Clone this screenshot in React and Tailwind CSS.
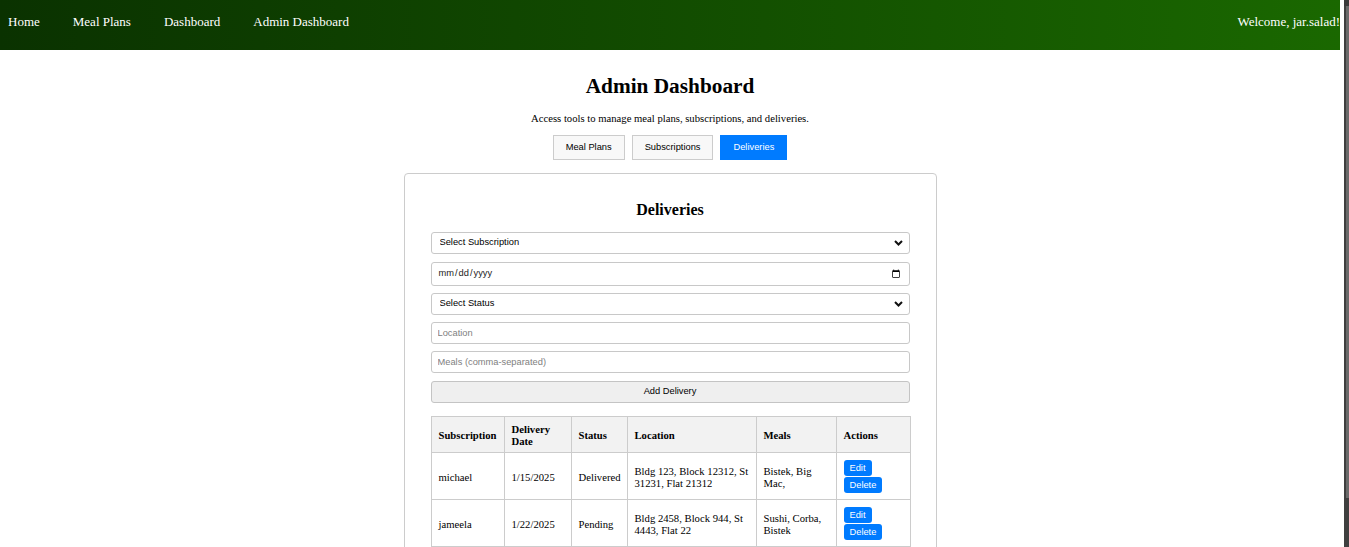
import React from 'react';

const deliveries = [
  {
    sub: "michael",
    date: "1/15/2025",
    status: "Delivered",
    location: "Bldg 123, Block 12312, St 31231, Flat 21312",
    meals: "Bistek, Big Mac,",
  },
  {
    sub: "jameela",
    date: "1/22/2025",
    status: "Pending",
    location: "Bldg 2458, Block 944, St 4443, Flat 22",
    meals: "Sushi, Corba, Bistek",
  },
];

const Chevron = () => (
  <svg className="pointer-events-none absolute right-[7px] top-1/2 -translate-y-1/2" width="9" height="6" viewBox="0 0 9 6">
    <path d="M1 1l3.5 3.5L8 1" fill="none" stroke="#111" strokeWidth="2" />
  </svg>
);

const App = () => {
  const fieldBox = "block w-full h-[22px] border border-[#c8c8c8] rounded-[3px] bg-white text-[9.3px] font-['Liberation_Sans',Arial,sans-serif] outline-none";
  const cell = "border border-[#cccccc] px-[7px]";

  return (
    <div className="flex h-[547px] w-[1349px] overflow-hidden bg-white font-['Liberation_Serif',serif] text-black">
      <div className="w-[1340px] shrink-0">
        {/* Barra de navegacion */}
        <nav className="flex h-[50px] justify-between bg-linear-to-r from-[#0a3200] to-[#1a6800] pl-2 pt-[14px] text-[13px] leading-[15px] text-white">
          <ul className="flex gap-[33px]">
            <li>Home</li>
            <li>Meal Plans</li>
            <li>Dashboard</li>
            <li>Admin Dashboard</li>
          </ul>
          <span>Welcome, jar.salad!</span>
        </nav>

        <main className="flex flex-col items-center">
          <h1 className="mt-[24px] text-[21.3px] font-bold leading-[25px]">Admin Dashboard</h1>
          <p className="mt-[13px] text-[10.67px] leading-[12px]">
            Access tools to manage meal plans, subscriptions, and deliveries.
          </p>

          {/* Tabs */}
          <div className="mt-[11px] flex gap-[7px] font-['Liberation_Sans',Arial,sans-serif] text-[9.3px]">
            <button className="h-[25px] border border-[#cccccc] bg-[#f8f8f8] px-[12px]">Meal Plans</button>
            <button className="h-[25px] border border-[#cccccc] bg-[#f8f8f8] px-[12px]">Subscriptions</button>
            <button className="h-[25px] border border-[#007bff] bg-[#007bff] px-[12px] text-white">Deliveries</button>
          </div>

          {/* Tarjeta de entregas */}
          <div className="mt-[13px] w-[533px] rounded-[4px] border border-[#cccccc] px-[26px] pt-[26px] pb-[26px]">
            <h2 className="text-center text-[16px] font-bold leading-[19px]">Deliveries</h2>

            <div className="relative mt-[13px]">
              <select className={`${fieldBox} appearance-none pl-[8px]`}>
                <option>Select Subscription</option>
              </select>
              <Chevron />
            </div>

            <input type="date" className={`${fieldBox} mt-[8px] h-[24px] px-[6px] text-[#222]`} />

            <div className="relative mt-[7px]">
              <select className={`${fieldBox} appearance-none pl-[8px]`}>
                <option>Select Status</option>
              </select>
              <Chevron />
            </div>

            <input type="text" placeholder="Location" className={`${fieldBox} mt-[7px] px-[6px] placeholder:text-[#808080]`} />
            <input type="text" placeholder="Meals (comma-separated)" className={`${fieldBox} mt-[7px] px-[6px] placeholder:text-[#808080]`} />

            <button className="mt-[8px] block h-[22px] w-full rounded-[3px] border border-[#c4c4c4] bg-[#efefef] text-center font-['Liberation_Sans',Arial,sans-serif] text-[9.3px]">
              Add Delivery
            </button>

            {/* Tabla */}
            <table className="mt-[13px] w-full table-fixed border-collapse text-left text-[10.67px] leading-[12px]">
              <colgroup>
                <col className="w-[73px]" />
                <col className="w-[67px]" />
                <col className="w-[56px]" />
                <col className="w-[129px]" />
                <col className="w-[80px]" />
                <col className="w-[74px]" />
              </colgroup>
              <thead>
                <tr className="bg-[#f2f2f2] font-bold">
                  <th className={`${cell} pt-[6px] pb-[5px]`}>Subscription</th>
                  <th className={`${cell} pt-[6px] pb-[5px]`}>Delivery Date</th>
                  <th className={`${cell} pt-[6px] pb-[5px]`}>Status</th>
                  <th className={`${cell} pt-[6px] pb-[5px]`}>Location</th>
                  <th className={`${cell} pt-[6px] pb-[5px]`}>Meals</th>
                  <th className={`${cell} pt-[6px] pb-[5px]`}>Actions</th>
                </tr>
              </thead>
              <tbody>
                {deliveries.map((d, i) => (
                  <tr key={i}>
                    <td className={`${cell} pt-[7px] pb-[6px]`}>{d.sub}</td>
                    <td className={`${cell} pt-[7px] pb-[6px]`}>{d.date}</td>
                    <td className={`${cell} pt-[7px] pb-[6px]`}>{d.status}</td>
                    <td className={`${cell} pt-[7px] pb-[6px]`}>{d.location}</td>
                    <td className={`${cell} pt-[7px] pb-[6px]`}>{d.meals}</td>
                    <td className={`${cell} pt-[7px] pb-[6px]`}>
                      <div className="flex flex-col items-start gap-[1px] font-['Liberation_Sans',Arial,sans-serif] text-[9.3px]">
                        <button className="h-[16px] rounded-[3px] bg-[#007bff] px-[6px] text-white">Edit</button>
                        <button className="h-[16px] rounded-[3px] bg-[#007bff] px-[6px] text-white">Delete</button>
                      </div>
                    </td>
                  </tr>
                ))}
              </tbody>
            </table>
          </div>
        </main>
      </div>

      {/* Barra de desplazamiento */}
      <div className="ml-[4px] flex w-[5px] flex-col bg-[#3f3f3f]">
        <div className="h-[6px] bg-[#3a3a3a]" />
        <div className="ml-[2px] h-[492px] bg-[#6a6a6a]" />
      </div>
    </div>
  );
};

export default App;
